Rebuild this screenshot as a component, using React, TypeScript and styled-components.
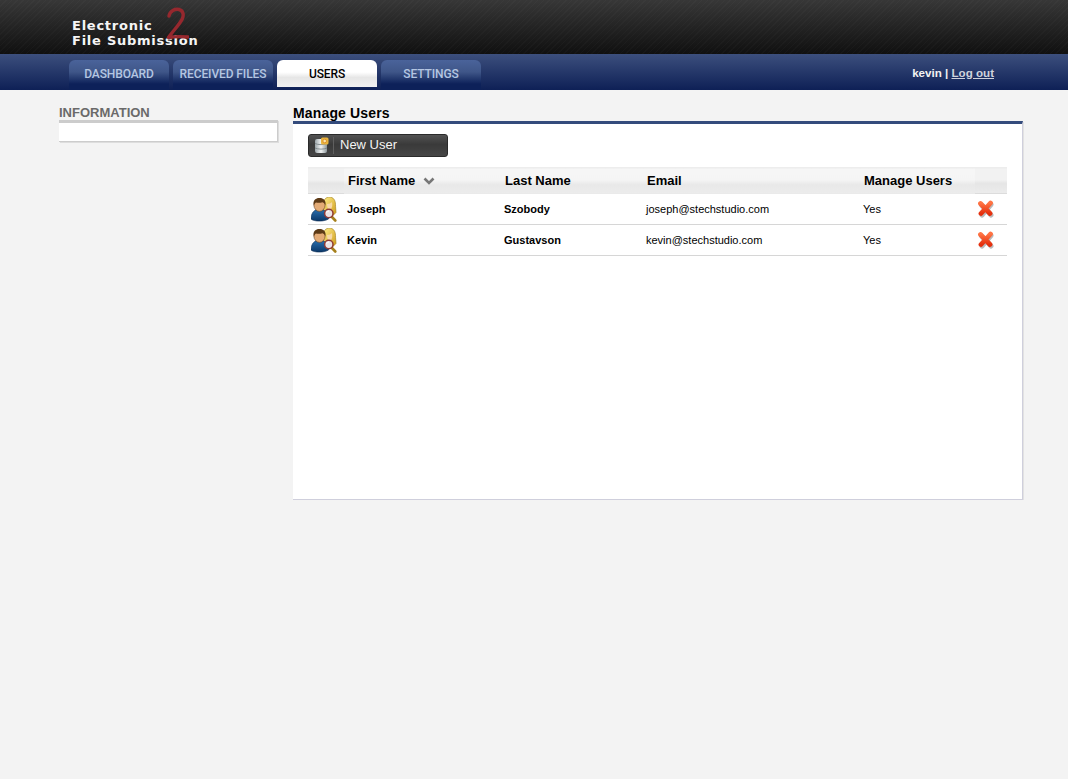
import styled, { createGlobalStyle } from 'styled-components';

const users = [
  { first: 'Joseph', last: 'Szobody', email: 'joseph@stechstudio.com', manage: 'Yes' },
  { first: 'Kevin', last: 'Gustavson', email: 'kevin@stechstudio.com', manage: 'Yes' },
];

const tabs = ['DASHBOARD', 'RECEIVED FILES', 'USERS', 'SETTINGS'];

const UsersIcon = () => (
  <svg width="26" height="25" viewBox="0 0 26 25">
    <defs>
      <linearGradient id="hair" x1="0" y1="0" x2="1" y2="1">
        <stop offset="0" stopColor="#fff08c" />
        <stop offset="1" stopColor="#cf9a18" />
      </linearGradient>
      <linearGradient id="shirt" x1="0" y1="0" x2="0" y2="1">
        <stop offset="0" stopColor="#2a6fae" />
        <stop offset="1" stopColor="#0b3768" />
      </linearGradient>
    </defs>
    <path d="M12 8c0-5 3-8 6.500-8s6 3 6 7.500c0 3 .5 6 .5 8l-3 3h-8l-2-5z" fill="url(#hair)" stroke="#9c7a12" strokeWidth=".6" />
    <path d="M16 7c2 0 4-1 5-2 .5 3 .5 6-2 8-2 0-3-3-3-6z" fill="#f7d9a8" />
    <path d="M0 22c0-5 2.500-9 6.500-9.500h4c4.500.5 7 4.500 7 9.500-3.500 2.500-14 3-17.500 0z" fill="url(#shirt)" stroke="#082a52" strokeWidth=".6" />
    <ellipse cx="8.500" cy="8" rx="5.600" ry="6.400" fill="#e3ab76" stroke="#5f3d1c" strokeWidth=".6" />
    <path d="M2.800 8.500C1.500 3 4.800 1 8.500 1s7 2 5.800 7.500c-.5-1.800-1.500-3-2.800-3.300-2.200 .8-5 .8-6.500 .3-1 .6-1.600 1.800-2.200 3z" fill="#5c3a16" />
    <path d="M20.500 19.500l3.800 4" stroke="#a5801c" strokeWidth="2.600" strokeLinecap="round" />
    <circle cx="17.800" cy="16.500" r="4.200" fill="#ece4e6" stroke="#8f3a36" strokeWidth="1.500" />
    <path d="M15.500 15.700a2.600 2.600 0 0 1 2.600-1.700" stroke="#fff" strokeWidth="1" fill="none" />
  </svg>
);

const DeleteIcon = () => (
  <svg width="18" height="18" viewBox="0 0 18 18">
    <defs>
      <linearGradient id="cross" x1="0" y1="0" x2="0" y2="1">
        <stop offset="0" stopColor="#ff7444" />
        <stop offset="1" stopColor="#e5300e" />
      </linearGradient>
    </defs>
    <path d="M4.500 5l9.500 10M14 4.500L5 15" stroke="#777" strokeWidth="5" strokeLinecap="round" opacity=".5" />
    <path d="M3.500 3.500l9.500 10M13.500 3L4 13.500" stroke="url(#cross)" strokeWidth="4.800" strokeLinecap="round" />
  </svg>
);

const DatabaseIcon = () => (
  <svg width="15" height="17" viewBox="0 0 15 17">
    <defs>
      <linearGradient id="drum" x1="0" y1="0" x2="1" y2="0">
        <stop offset="0" stopColor="#9aa4a8" />
        <stop offset=".5" stopColor="#f1f3f3" />
        <stop offset="1" stopColor="#8d979b" />
      </linearGradient>
    </defs>
    <rect x="1" y="2" width="12" height="14" rx="2" fill="url(#drum)" />
    <path d="M1 6.500c3 1.500 9 1.500 12 0M1 11c3 1.500 9 1.500 12 0" stroke="#717c80" strokeWidth=".8" fill="none" />
    <rect x="7" y="0.500" width="7.500" height="7" rx="1.500" fill="#e9b43c" />
    <circle cx="10.700" cy="4" r="1.800" fill="#f9e6a8" stroke="#d77b1d" strokeWidth=".7" />
  </svg>
);

const App = () => {
  return (
    <>
      <GlobalStyle />
      <Header>
        <Logo>
          Electronic
          <br />
          File Submission
          <LogoMark width="24" height="36" viewBox="0 0 24 36">
            <path
              d="M4 9C5 4 10 1.500 14 2.500c4 1 5 5 3.500 9C15 17 8 24 3.500 30.500c5-1 13-1 19.500-.5"
              fill="none"
              stroke="#96282e"
              strokeWidth="3.400"
              strokeLinecap="round"
              strokeLinejoin="round"
            />
          </LogoMark>
        </Logo>
      </Header>
      <Nav>
        <Tabs>
          {tabs.map((tab) => (
            <Tab key={tab} $active={tab === 'USERS'}>
              {tab}
            </Tab>
          ))}
        </Tabs>
        <UserBox>
          kevin | <a href="#logout">Log out</a>
        </UserBox>
      </Nav>
      <Page>
        <Sidebar>
          <SideTitle>INFORMATION</SideTitle>
          <SideBox />
        </Sidebar>
        <Main>
          <MainTitle>Manage Users</MainTitle>
          <Panel>
            <NewUserButton>
              <ButtonIcon>
                <DatabaseIcon />
              </ButtonIcon>
              New User
            </NewUserButton>
            <UserTable>
              <thead>
                <tr>
                  <HeadCell $width={36} $edge />
                  <HeadCell $width={157}>
                    First Name
                    <SortArrow width="12" height="8" viewBox="0 0 12 8">
                      <path d="M1.500 1.500L6 6l4.500-4.500" fill="none" stroke="#777" strokeWidth="2.600" />
                    </SortArrow>
                  </HeadCell>
                  <HeadCell $width={142}>Last Name</HeadCell>
                  <HeadCell $width={217}>Email</HeadCell>
                  <HeadCell $width={115}>Manage Users</HeadCell>
                  <HeadCell $width={32} $edge />
                </tr>
              </thead>
              <tbody>
                {users.map((user) => (
                  <tr key={user.email}>
                    <IconCell $inset={5}>
                      <UsersIcon />
                    </IconCell>
                    <NameCell>{user.first}</NameCell>
                    <NameCell>{user.last}</NameCell>
                    <Cell>{user.email}</Cell>
                    <Cell>{user.manage}</Cell>
                    <IconCell $inset={10}>
                      <DeleteIcon />
                    </IconCell>
                  </tr>
                ))}
              </tbody>
            </UserTable>
          </Panel>
        </Main>
      </Page>
    </>
  );
};
export default App;

const GlobalStyle = createGlobalStyle`
  html, body {
    margin: 0;
    min-height: 100%;
    background: #f3f3f3;
    font-family: "Liberation Sans", Arial, sans-serif;
    color: #000;
  }
`;

const Header = styled.div`
  height: 54px;
  padding-left: 72px;
  box-sizing: border-box;
  background:
    repeating-linear-gradient(135deg, rgba(255, 255, 255, 0.018) 0 1px, rgba(255, 255, 255, 0) 1px 4px),
    linear-gradient(#373737, #101010);
`;

const Logo = styled.div`
  position: relative;
  width: 130px;
  padding-top: 18px;
  font-family: "DejaVu Sans", sans-serif;
  font-size: 13px;
  font-weight: 700;
  line-height: 15px;
  letter-spacing: 0.75px;
  color: #f5f5f5;
  white-space: nowrap;
`;

const LogoMark = styled.svg`
  position: absolute;
  left: 93px;
  top: 7px;
`;

const Nav = styled.div`
  height: 36px;
  padding: 6px 74px 0 69px;
  box-sizing: border-box;
  display: flex;
  justify-content: space-between;
  background: linear-gradient(#3c4f7d, #0e2056);
`;

const Tabs = styled.div`
  display: flex;
  gap: 4px;
`;

const Tab = styled.div<{ $active?: boolean }>`
  width: 100px;
  height: ${(p) => (p.$active ? '27px' : '30px')};
  padding-top: 7px;
  box-sizing: border-box;
  border-radius: 6px 6px 0 0;
  text-align: center;
  font-family: Roboto, "DejaVu Sans Condensed", sans-serif;
  font-size: 12px;
  font-weight: 500;
  letter-spacing: -0.1px;
  line-height: 14px;
  color: ${(p) => (p.$active ? '#000' : '#b4c6e2')};
  background: ${(p) =>
    p.$active
      ? 'linear-gradient(#fff 0, #fff 45%, #e6e6e6 65%, #f1f1f1 100%)'
      : 'linear-gradient(#4a639a, #3f5688 40%, #0d2159 80%)'};
`;

const UserBox = styled.div`
  padding-top: 6px;
  font-size: 11.600px;
  font-weight: 700;
  line-height: 13px;
  color: #f2f2f2;
  a {
    color: #cfd3dc;
  }
`;

const Page = styled.div`
  display: flex;
  gap: 15px;
  padding: 16px 45px 0 59px;
`;

const Sidebar = styled.div`
  width: 219px;
`;

const SideTitle = styled.div`
  font-size: 13px;
  font-weight: 700;
  line-height: 14px;
  color: #6a6a6a;
`;

const SideBox = styled.div`
  height: 18px;
  background: #fff;
  border-top: 3px solid #cccccc;
  border-right: 1px solid #cccccc;
  border-bottom: 1px solid #cccccc;
  box-shadow: 1px 1px 0 #dddddd;
`;

const Main = styled.div`
  flex: 1;
`;

const MainTitle = styled.div`
  font-size: 14px;
  font-weight: 700;
  line-height: 15px;
  letter-spacing: 0.15px;
`;

const Panel = styled.div`
  height: 365px;
  padding: 10px 15px 0;
  background: #fff;
  border-top: 3px solid #344b7c;
  border-right: 1px solid #cfcfdc;
  border-bottom: 1px solid #cfcfdc;
  box-shadow: 1px 1px 0 #e2e2e2;
`;

const NewUserButton = styled.button`
  display: flex;
  align-items: center;
  width: 140px;
  height: 23px;
  padding: 0 0 2px;
  border: 1px solid #2a2a2a;
  border-radius: 3px;
  font-family: inherit;
  font-size: 13px;
  color: #f4f4f4;
  background: linear-gradient(#525252, #3a3a3a 45%, #454545);
`;

const ButtonIcon = styled.span`
  display: flex;
  align-items: center;
  justify-content: center;
  width: 24px;
  height: 17px;
  margin-top: 2px;
  margin-right: 6px;
  border-right: 1px solid #5f5f5f;
`;

const UserTable = styled.table`
  width: 699px;
  margin-top: 10px;
  table-layout: fixed;
  border-collapse: collapse;
  border-spacing: 0;
`;

const HeadCell = styled.th<{ $width: number; $edge?: boolean }>`
  width: ${(p) => p.$width}px;
  height: 26px;
  padding: 0 0 1px 4px;
  box-sizing: border-box;
  text-align: left;
  font-size: 13px;
  font-weight: 700;
  white-space: nowrap;
  border-top: 1px solid #ededed;
  border-bottom: 1px solid ${(p) => (p.$edge ? '#dcdcdc' : '#eaeaea')};
  background: ${(p) =>
    p.$edge
      ? 'linear-gradient(#f2f2f2, #f2f2f2 45%, #e5e5e5 60%, #ececec)'
      : 'linear-gradient(#f6f6f6, #f5f5f5 45%, #e8e8e8 65%, #ececec)'};
`;

const SortArrow = styled.svg`
  margin-left: 8px;
`;

const Cell = styled.td`
  height: 30px;
  padding: 0 0 0 3px;
  box-sizing: content-box;
  font-size: 11px;
  border-bottom: 1px solid #d6d6d6;
`;

const NameCell = styled(Cell)`
  font-weight: 700;
`;

const IconCell = styled(Cell)<{ $inset: number }>`
  padding: 0 ${(p) => p.$inset}px 0 0;
  text-align: center;
  line-height: 0;
`;
